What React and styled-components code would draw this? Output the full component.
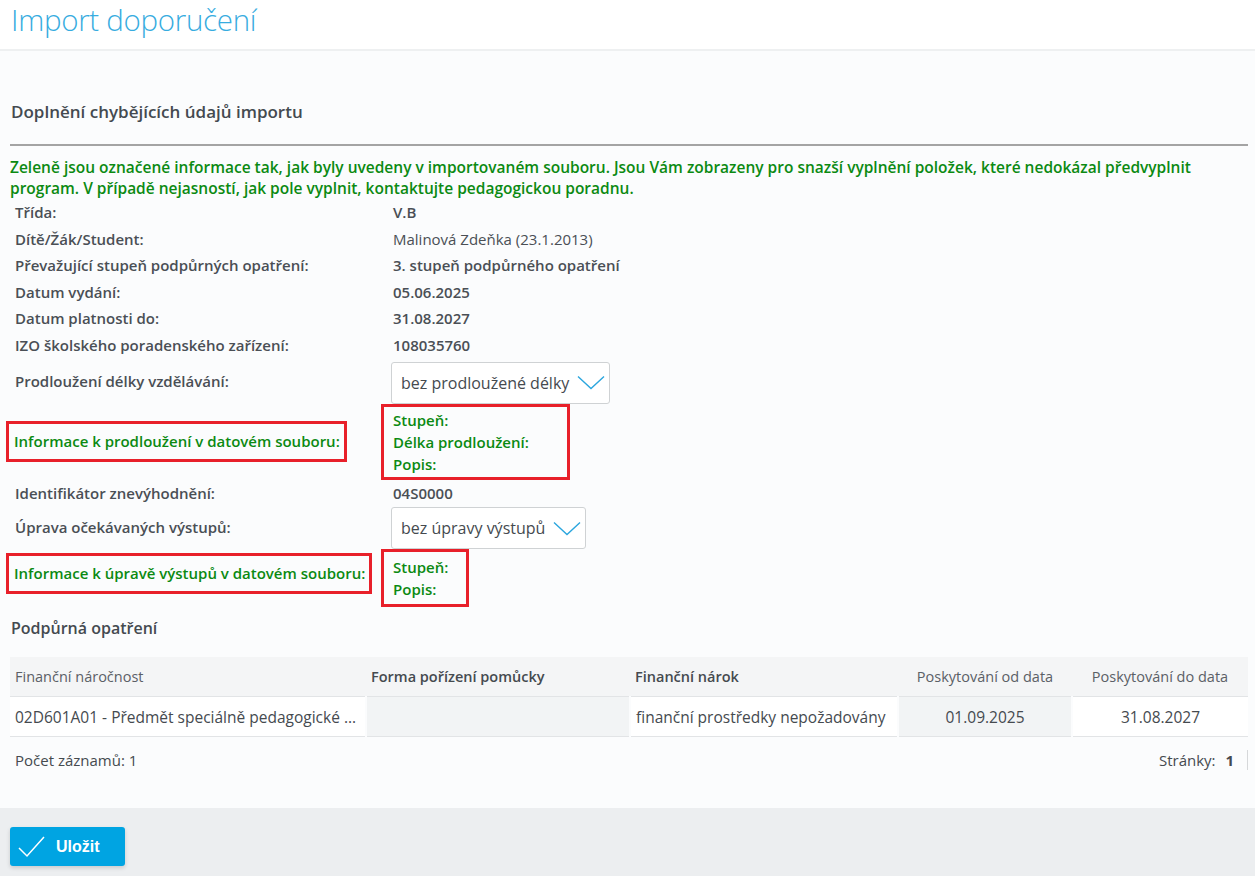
import React from 'react'
import styled, {createGlobalStyle} from 'styled-components'

const GlobalStyle = createGlobalStyle`
  html, body {
    margin: 0;
    padding: 0;
  }
  body {
    font-family: "Open Sans", "Noto Sans", sans-serif;
    color: #454a4f;
    background: #fbfcfd;
  }
`

const rows = [
	{label: 'Třída:', value: 'V.B', bold: true},
	{label: 'Dítě/Žák/Student:', value: 'Malinová Zdeňka (23.1.2013)'},
	{label: 'Převažující stupeň podpůrných opatření:', value: '3. stupeň podpůrného opatření', bold: true},
	{label: 'Datum vydání:', value: '05.06.2025', bold: true},
	{label: 'Datum platnosti do:', value: '31.08.2027', bold: true},
	{label: 'IZO školského poradenského zařízení:', value: '108035760', bold: true},
]

const Chevron = () => (
	<svg width="28" height="15" viewBox="0 0 28 15" fill="none">
		<path d="M1 1.5 L14 13.5 L27 1.5" stroke="#2ba6de" strokeWidth="1.4"/>
	</svg>
)

const Check = () => (
	<svg width="27" height="22" viewBox="0 0 27 22" fill="none">
		<path d="M1 12 L9 20 L26 1" stroke="#fff" strokeWidth="1.5"/>
	</svg>
)

const App = () => {
	return (
		<Page>
			<GlobalStyle/>
			<TitleBar>
				<Title>Import doporučení</Title>
			</TitleBar>

			<Content>
				<SectionTitle>Doplnění chybějících údajů importu</SectionTitle>
				<Divider/>
				<Notice>
					Zeleně jsou označené informace tak, jak byly uvedeny v importovaném souboru. Jsou Vám zobrazeny pro snazší vyplnění položek, které nedokázal předvyplnit<br/>
					program. V případě nejasností, jak pole vyplnit, kontaktujte pedagogickou poradnu.
				</Notice>

				<InfoGrid>
					{rows.map((r) => (
						<React.Fragment key={r.label}>
							<Label>{r.label}</Label>
							<Value $bold={r.bold}>{r.value}</Value>
						</React.Fragment>
					))}

					<Label>Prodloužení délky vzdělávání:</Label>
					<SelectCell>
						<Select $top="3px">
							<span>bez prodloužené délky</span>
							<Chevron/>
						</Select>
					</SelectCell>

					<Label>
						<RedLabel>Informace k prodloužení v datovém souboru:</RedLabel>
					</Label>
					<SelectCell>
						<RedValues $pad="2px" $width="189px">
							<GreenLine>Stupeň:</GreenLine>
							<GreenLine>Délka prodloužení:</GreenLine>
							<GreenLine>Popis:</GreenLine>
						</RedValues>
					</SelectCell>

					<Label>Identifikátor znevýhodnění:</Label>
					<Value $bold>04S0000</Value>

					<Label>Úprava očekávaných výstupů:</Label>
					<SelectCell>
						<Select $top="1px">
							<span>bez úpravy výstupů</span>
							<Chevron/>
						</Select>
					</SelectCell>

					<Label>
						<RedLabel $lift>Informace k úpravě výstupů v datovém souboru:</RedLabel>
					</Label>
					<SelectCell>
						<RedValues $pad="4px" $width="88px">
							<GreenLine>Stupeň:</GreenLine>
							<GreenLine>Popis:</GreenLine>
						</RedValues>
					</SelectCell>
				</InfoGrid>

				<SubTitle>Podpůrná opatření</SubTitle>

				<Table>
					<colgroup>
						<col style={{width: 356}}/>
						<col style={{width: 264}}/>
						<col style={{width: 268}}/>
						<col style={{width: 174}}/>
						<col/>
					</colgroup>
					<thead>
						<tr>
							<Th>Finanční náročnost</Th>
							<Th $bold>Forma pořízení pomůcky</Th>
							<Th $bold>Finanční nárok</Th>
							<Th $center>Poskytování od data</Th>
							<Th $center>Poskytování do data</Th>
						</tr>
					</thead>
					<tbody>
						<tr>
							<Td><Ellipsis>02D601A01 - Předmět speciálně pedagogické péče</Ellipsis></Td>
							<Td $shade/>
							<Td>finanční prostředky nepožadovány</Td>
							<Td $shade $center>01.09.2025</Td>
							<Td $center>31.08.2027</Td>
						</tr>
					</tbody>
				</Table>

				<TableFooter>
					<span>Počet záznamů: 1</span>
					<Pager>Stránky: <b>1</b></Pager>
				</TableFooter>
			</Content>

			<Footer>
				<SaveButton type="button">
					<Check/>
					<span>Uložit</span>
				</SaveButton>
			</Footer>
		</Page>
	)
}

export default App

const Page = styled.div`
  display: flex;
  flex-direction: column;
  min-height: 100vh;
`

const TitleBar = styled.div`
  height: 51px;
  background: #fff;
  border-bottom: 2px solid #eef0f1;
  padding-left: 11px;
  box-sizing: border-box;
`

const Title = styled.h1`
  margin: 0;
  font-weight: 300;
  font-size: 29.5px;
  line-height: 40px;
  color: #37ace0;
  letter-spacing: -0.3px;
`

const Content = styled.div`
  flex: 1;
  padding: 0 7px 24px 10px;
`

const SectionTitle = styled.h2`
  margin: 49px 0 0 1px;
  font-size: 17px;
  font-weight: 600;
  line-height: 24px;
  color: #444a50;
`

const Divider = styled.div`
  height: 2px;
  background: #a4a4a4;
  margin-top: 20px;
`

const Notice = styled.p`
  margin: 11px 0 0 0;
  color: #0b8a12;
  font-weight: 600;
  font-size: 15.5px;
  line-height: 21px;
`

const InfoGrid = styled.div`
  display: grid;
  grid-template-columns: 378px 1fr;
  margin-left: 5px;
  align-items: center;
`

const Label = styled.div`
  font-size: 15px;
  font-weight: 600;
  line-height: 26.6px;
  color: #4a4f55;
`

const Value = styled.div`
  font-size: 15px;
  line-height: 26.6px;
  font-weight: ${p => p.$bold ? 600 : 400};
  color: #4a4f55;
`

const SelectCell = styled.div`
  display: flex;
  align-items: center;
`

const Select = styled.div`
  display: inline-flex;
  align-items: center;
  gap: 8px;
  height: 42px;
  box-sizing: border-box;
  margin: ${p => p.$top} 0 0 -2px;
  padding: 0 4px 0 9px;
  background: #fff;
  border: 1px solid #cfd2d4;
  border-radius: 3px;
  font-size: 16px;
  color: #454a4f;
`

const RedLabel = styled.span`
  display: inline-block;
  margin: ${p => p.$lift ? '0 0 9px -9px' : '0 0 0 -9px'};
  padding: 7px 4px 7px 5px;
  border: 3px solid #e8202a;
  color: #0b8a12;
  font-weight: 600;
  line-height: 21px;
`

const RedValues = styled.div`
  margin-left: -12px;
  padding: ${p => p.$pad} 0 ${p => p.$pad} 9px;
  width: ${p => p.$width};
  box-sizing: border-box;
  border: 3px solid #e8202a;
`

const GreenLine = styled.div`
  color: #0b8a12;
  font-size: 15px;
  font-weight: 600;
  line-height: 22px;
  white-space: nowrap;
`

const SubTitle = styled.h3`
  margin: 9px 0 0 1px;
  font-size: 16px;
  font-weight: 600;
  line-height: 24px;
  color: #444a50;
`

const Table = styled.table`
  width: 100%;
  margin-top: 17px;
  border-collapse: collapse;
  table-layout: fixed;
`

const Th = styled.th`
  height: 39px;
  padding: 0 5px;
  background: #f4f5f6;
  border-bottom: 1px solid #e2e4e6;
  text-align: ${p => p.$center ? 'center' : 'left'};
  font-size: 14.5px;
  font-weight: ${p => p.$bold ? 600 : 400};
  color: ${p => p.$bold ? '#454a4f' : '#5b6066'};
  white-space: nowrap;
`

const Td = styled.td`
  height: 39px;
  padding: 0 5px;
  background: ${p => p.$shade ? '#f2f4f5' : '#fff'};
  border-bottom: 1px solid #e2e4e6;
  border-left: 2px solid #fbfcfd;
  text-align: ${p => p.$center ? 'center' : 'left'};
  font-size: 15.5px;
  color: #454a4f;
  white-space: nowrap;

  &:first-child {
    border-left: none;
  }
`

const Ellipsis = styled.div`
  overflow: hidden;
  text-overflow: ellipsis;
  white-space: nowrap;
`

const TableFooter = styled.div`
  display: flex;
  justify-content: space-between;
  align-items: center;
  padding: 13px 0 0 5px;
  font-size: 15px;
  color: #454a4f;
`

const Pager = styled.span`
  padding-right: 7px;
  border-right: 1px solid #d6d8da;
  line-height: 20px;

  b {
    margin-left: 6px;
    margin-right: 6px;
  }
`

const Footer = styled.div`
  background: #eceef0;
  padding: 19px 10px 10px;
  height: 68px;
  box-sizing: border-box;
`

const SaveButton = styled.button`
  display: inline-flex;
  align-items: center;
  gap: 11px;
  width: 115px;
  height: 39px;
  padding: 0 0 0 8px;
  border: none;
  border-radius: 3px;
  background: #00a4e2;
  box-shadow: 0 2px 4px rgba(0, 0, 0, 0.15);
  color: #fff;
  font-family: "Liberation Sans", Arial, sans-serif;
  font-weight: 700;
  font-size: 16px;
  cursor: pointer;
`
